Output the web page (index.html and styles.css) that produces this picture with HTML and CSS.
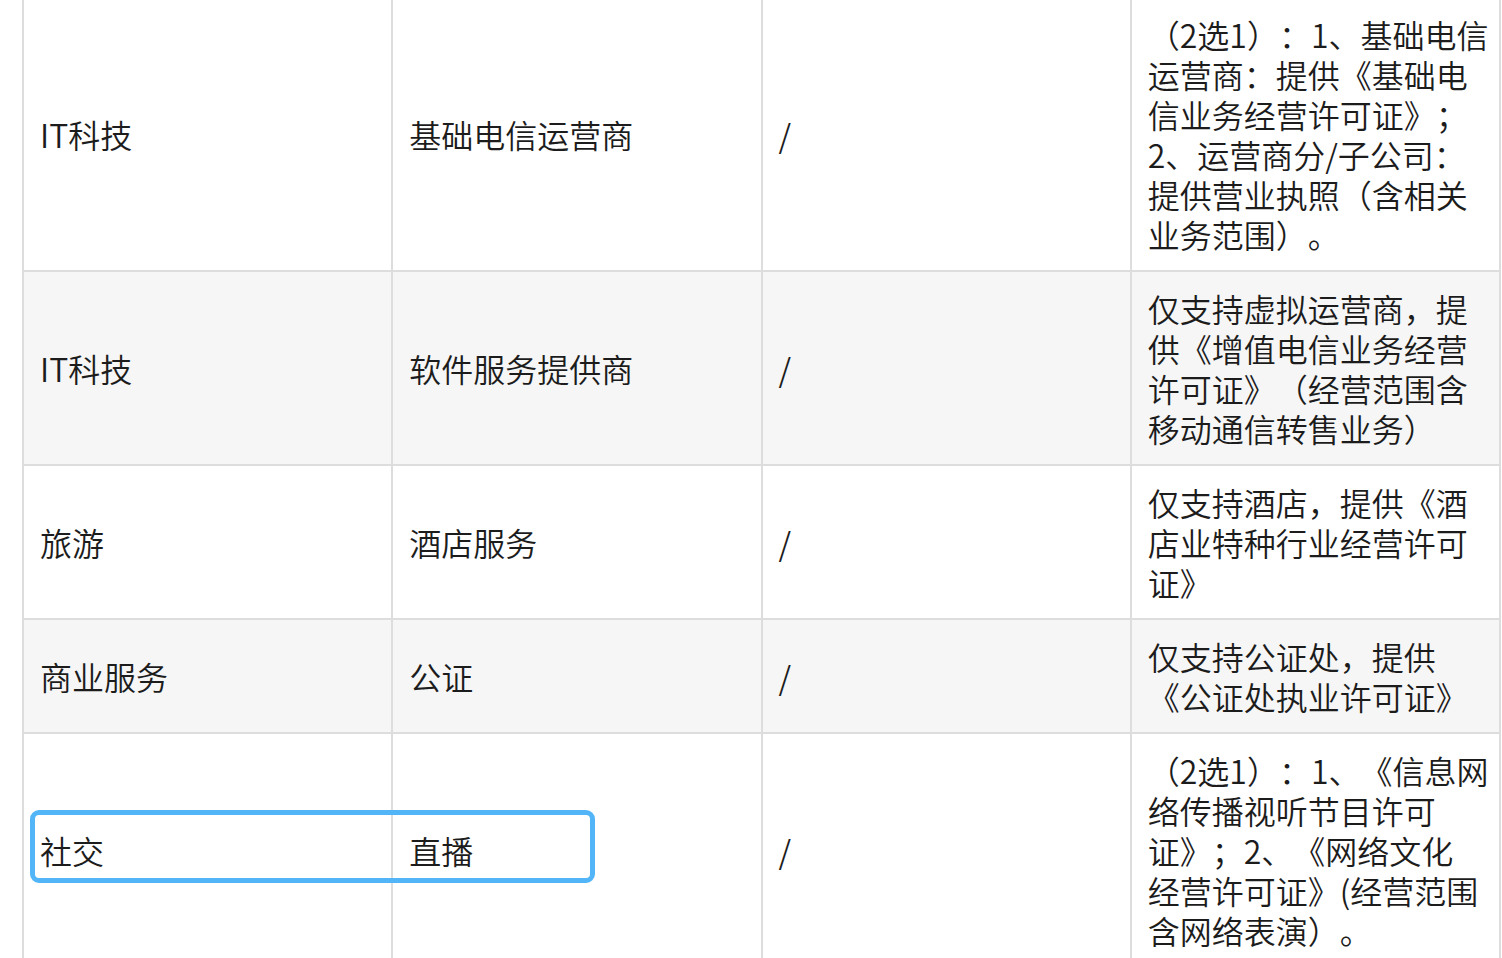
FILE: index.html
```html
<!DOCTYPE html>
<html lang="zh-CN">
<head>
<meta charset="utf-8">
<title>行业资质表</title>
<link rel="stylesheet" href="styles.css">
</head>
<body>
<div class="page">
  <table class="qual-table">
    <tbody>
      <tr>
        <td>IT科技</td>
        <td>基础电信运营商</td>
        <td>/</td>
        <td class="req">（2选1）：1、基础电信<br>运营商：提供《基础电<br>信业务经营许可证》；<br>2、运营商分/子公司：<br>提供营业执照（含相关<br>业务范围）。</td>
      </tr>
      <tr class="alt">
        <td>IT科技</td>
        <td>软件服务提供商</td>
        <td>/</td>
        <td class="req">仅支持虚拟运营商，提<br>供《增值电信业务经营<br>许可证》（经营范围含<br>移动通信转售业务）</td>
      </tr>
      <tr>
        <td>旅游</td>
        <td>酒店服务</td>
        <td>/</td>
        <td class="req">仅支持酒店，提供《酒<br>店业特种行业经营许可<br>证》</td>
      </tr>
      <tr class="alt">
        <td>商业服务</td>
        <td>公证</td>
        <td>/</td>
        <td class="req">仅支持公证处，提供<br>《公证处执业许可证》</td>
      </tr>
      <tr>
        <td>社交</td>
        <td>直播</td>
        <td>/</td>
        <td class="req">（2选1）：1、《信息网<br>络传播视听节目许可<br>证》；2、《网络文化<br>经营许可证》(经营范围<br>含网络表演）。</td>
      </tr>
    </tbody>
  </table>
  <div class="highlight"></div>
</div>
</body>
</html>
```

FILE: styles.css
```css
html, body {
  margin: 0;
  padding: 0;
  background: #ffffff;
}

body {
  font-family: "Noto Sans CJK SC", "Noto Sans", sans-serif;
  font-weight: 350;
  color: #1c1c1c;
  overflow: hidden;
}

.page {
  position: relative;
  width: 1502px;
  height: 958px;
  overflow: hidden;
}

.qual-table {
  margin: -4px 0 0 22px;
  width: 1479px;
  table-layout: fixed;
  border-collapse: separate;
  border-spacing: 0;
  border-left: 2px solid #dddddd;
  border-top: 2px solid #dddddd;
  font-size: 32px;
  line-height: 40px;
  text-spacing-trim: space-all;
}

.qual-table td {
  padding: 16px 16px;
  vertical-align: middle;
  border-right: 2px solid #dddddd;
  border-bottom: 2px solid #dddddd;
}

.qual-table td.req {
  white-space: nowrap;
  padding-right: 8px;
}

.qual-table tr.alt td {
  background: #f6f6f6;
}

.highlight {
  position: absolute;
  left: 30px;
  top: 810px;
  width: 555px;
  height: 63px;
  border: 5px solid #52b5f7;
  border-radius: 9px;
}
```
